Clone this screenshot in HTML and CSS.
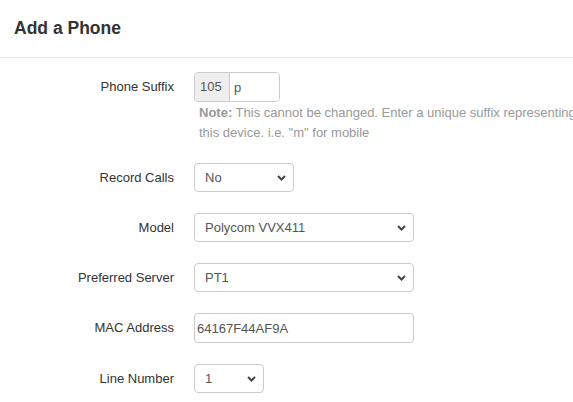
FILE: index.html
```html
<!DOCTYPE html>
<html lang="en">
<head>
  <meta charset="UTF-8">
  <meta name="viewport" content="width=device-width, initial-scale=1.0">
  <title>Add a Phone</title>
  <link rel="stylesheet" href="styles.css">
</head>
<body>
  <div class="panel">
    <header class="panel-header">
      <h1>Add a Phone</h1>
    </header>
    <form class="panel-body">
      <div class="form-row first">
        <label class="form-label tall">Phone Suffix</label>
        <div class="form-field">
          <div class="input-group">
            <span class="addon">105</span>
            <input class="addon-input" type="text" value="p">
          </div>
          <p class="help"><strong>Note:</strong> This cannot be changed. Enter a unique suffix representing this device. i.e. "m" for mobile</p>
        </div>
      </div>

      <div class="form-row">
        <label class="form-label">Record Calls</label>
        <div class="select-wrap w-sm">
          <select class="control">
            <option>No</option>
            <option>Yes</option>
          </select>
          <svg class="chevron" width="9" height="6" viewBox="0 0 9 6"><path d="M1 1l3.5 3.5L8 1" fill="none" stroke="#444" stroke-width="2"/></svg>
        </div>
      </div>

      <div class="form-row">
        <label class="form-label">Model</label>
        <div class="select-wrap w-lg">
          <select class="control">
            <option>Polycom VVX411</option>
          </select>
          <svg class="chevron" width="9" height="6" viewBox="0 0 9 6"><path d="M1 1l3.5 3.5L8 1" fill="none" stroke="#444" stroke-width="2"/></svg>
        </div>
      </div>

      <div class="form-row">
        <label class="form-label">Preferred Server</label>
        <div class="select-wrap w-lg">
          <select class="control">
            <option>PT1</option>
          </select>
          <svg class="chevron" width="9" height="6" viewBox="0 0 9 6"><path d="M1 1l3.5 3.5L8 1" fill="none" stroke="#444" stroke-width="2"/></svg>
        </div>
      </div>

      <div class="form-row">
        <label class="form-label">MAC Address</label>
        <input class="control text-input w-lg" type="text" value="64167F44AF9A">
      </div>

      <div class="form-row">
        <label class="form-label">Line Number</label>
        <div class="select-wrap w-xs">
          <select class="control">
            <option>1</option>
            <option>2</option>
          </select>
          <svg class="chevron" width="9" height="6" viewBox="0 0 9 6"><path d="M1 1l3.5 3.5L8 1" fill="none" stroke="#444" stroke-width="2"/></svg>
        </div>
      </div>
    </form>
  </div>
</body>
</html>
```

FILE: styles.css
```css
* {
  margin: 0;
  padding: 0;
  box-sizing: border-box;
}

body {
  font-family: "Liberation Sans", Arial, sans-serif;
  font-size: 13px;
  color: #333;
  background: #fff;
  overflow: hidden;
}

.panel-header {
  height: 58px;
  display: flex;
  align-items: center;
  padding: 0 14px;
  border-bottom: 1px solid #e5e5e5;
}

.panel-header h1 {
  font-size: 17.5px;
  font-weight: bold;
  color: #333;
}

.panel-body {
  padding-top: 14px;
}

.form-row {
  display: grid;
  grid-template-columns: 174px auto;
  column-gap: 20px;
  align-items: start;
  margin-bottom: 21px;
}

.form-row.first {
  margin-bottom: 20px;
}

.form-label {
  text-align: right;
  line-height: 29px;
}

.form-label.tall {
  line-height: 30px;
}

/* suffix group */
.input-group {
  display: flex;
  width: 86px;
  height: 30px;
  border: 1px solid #ccc;
  border-radius: 4px;
  overflow: hidden;
}

.addon {
  width: 35px;
  background: #eee;
  border-right: 1px solid #ccc;
  color: #555;
  line-height: 28px;
  padding-left: 5px;
}

.addon-input {
  flex: 1;
  min-width: 0;
  border: none;
  outline: none;
  font: inherit;
  color: #555;
  padding-left: 4px;
}

.help {
  width: 385px;
  margin-top: 1px;
  padding-left: 5px;
  font-size: 13px;
  line-height: 20px;
  color: #999;
}

/* selects and inputs */
.select-wrap {
  position: relative;
}

.control {
  display: block;
  width: 100%;
  height: 29px;
  border: 1px solid #ccc;
  border-radius: 4px;
  background: #fff;
  font: inherit;
  color: #555;
  padding: 0 10px;
  appearance: none;
  -webkit-appearance: none;
  outline: none;
}

.text-input {
  padding: 0 2px;
  height: 30px;
}

.chevron {
  position: absolute;
  right: 8px;
  top: 12px;
  pointer-events: none;
}

.w-xs { width: 70px; }
.w-sm { width: 100px; }
.w-lg { width: 220px; }
```
